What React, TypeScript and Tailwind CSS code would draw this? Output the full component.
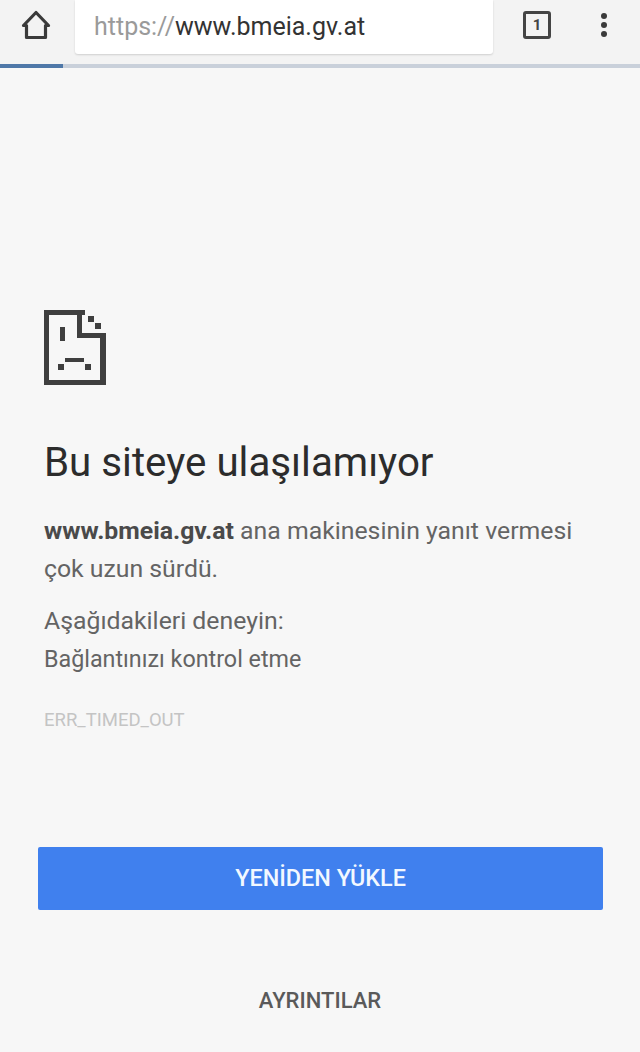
function SadPage() {
  return (
    <svg width="62" height="75" viewBox="0 0 62 75" className="block" fill="#3f3f3f">
      <path d="M0 0H41V5H5V70H56V28H33V5H38V23H62V75H0Z" />
      <rect x="44" y="6" width="6" height="6" />
      <rect x="51" y="13" width="6" height="6" />
      <rect x="16" y="17" width="5" height="14" />
      <rect x="21" y="48" width="19" height="4" />
      <rect x="14" y="54" width="6" height="6" />
      <rect x="41" y="54" width="6" height="6" />
    </svg>
  );
}

function HomeIcon() {
  return (
    <svg width="30" height="30" viewBox="0 0 30 30" fill="none" stroke="#3a3a3a" strokeWidth="3.2" strokeLinejoin="round">
      <path d="M15 2.5 27.5 15.5H24.5V27.5H5.5V15.5H2.5Z" />
    </svg>
  );
}

function Toolbar() {
  return (
    <div className="flex h-[64px] items-start bg-[#f3f3f3]">
      <div className="flex h-[50px] w-[75px] items-center justify-center pr-[3px]">
        <HomeIcon />
      </div>
      <div className="flex h-[54px] w-[418px] items-center rounded-b-[3px] bg-white pl-[19px] text-[25px] shadow-[0_1px_2px_rgba(0,0,0,0.15)]">
        <span className="text-[#9a9a9a]">https://</span>
        <span className="text-[#333333]">www.bmeia.gv.at</span>
      </div>
      <div className="flex h-[50px] flex-1 items-center">
        <div className="ml-[30px] flex h-[28px] w-[28px] items-center justify-center rounded-[3px] border-[3px] border-[#444444] text-[15px] leading-none font-bold text-[#444444]">
          1
        </div>
        <div className="ml-[50px] flex flex-col gap-[3px]">
          <span className="h-[6px] w-[6px] rounded-full bg-[#3a3a3a]" />
          <span className="h-[6px] w-[6px] rounded-full bg-[#3a3a3a]" />
          <span className="h-[6px] w-[6px] rounded-full bg-[#3a3a3a]" />
        </div>
      </div>
    </div>
  );
}

export default function App() {
  return (
    <div className="flex h-[1052px] w-[640px] flex-col overflow-hidden bg-[#f7f7f7] font-['Roboto',sans-serif]">
      <Toolbar />
      <div className="h-[4px] bg-[#c9d0da]">
        <div className="h-full w-[63px] bg-[#4f78a8]" />
      </div>
      <main className="flex flex-1 flex-col">
        <div className="px-[44px] pt-[242px]">
          <SadPage />
          <h1 className="mt-[55px] text-[40.3px] leading-[46px] font-normal whitespace-nowrap text-[#2c2c2c]">Bu siteye ulaşılamıyor</h1>
          <p className="mt-[26px] w-[540px] text-[24.8px] leading-[38px] text-[#646464]">
            <b className="font-bold text-[#4a4a4a]">www.bmeia.gv.at</b> ana makinesinin yanıt vermesi çok uzun sürdü.
          </p>
          <p className="mt-[14px] text-[24.8px] leading-[38px] text-[#646464]">Aşağıdakileri deneyin:</p>
          <p className="text-[23.3px] leading-[38px] text-[#646464]">Bağlantınızı kontrol etme</p>
          <p className="mt-[32px] text-[18.5px] leading-[20px] text-[#c4c4c4]">ERR_TIMED_OUT</p>
        </div>
        <div className="mt-[117px] pr-[37px] pl-[38px]">
          <button className="h-[63px] w-full rounded-[2px] bg-[#4080ee] text-[23.4px] font-medium text-[#f2f8ff]">
            YENİDEN YÜKLE
          </button>
        </div>
        <button className="mt-[74px] text-center text-[22px] font-medium text-[#5a5a5a]">AYRINTILAR</button>
      </main>
    </div>
  );
}
